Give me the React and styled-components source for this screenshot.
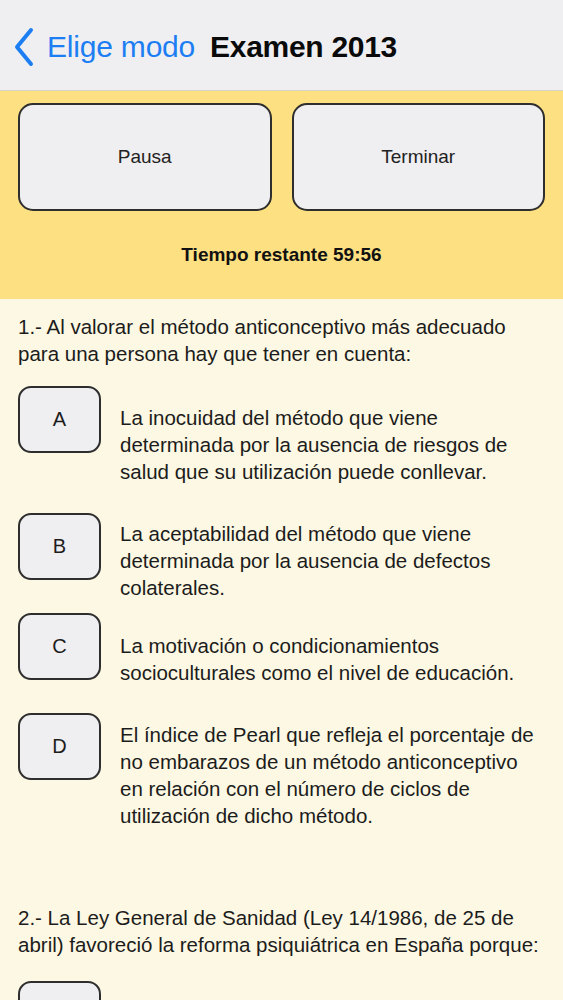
import React from 'react'
import styled, { createGlobalStyle } from "styled-components";

const Global = createGlobalStyle`
body{
    margin: 0;
    font-family: "Liberation Sans", Arial, sans-serif;
    background: #fdf8e3;
}
`;

const Page = styled.div`
width: 563px;
height: 1000px;
overflow: hidden;
background: #fdf8e3;
color: #1c1c1c;
`;

const NavBar = styled.div`
height: 91px;
background: #efeff2;
border-bottom: 1px solid #d6d3c4;
display: flex;
align-items: center;
padding: 3px 0 0 13px;
box-sizing: border-box;
`;

const BackLink = styled.div`
display: flex;
align-items: center;
color: #1c7ef2;
font-size: 30px;
letter-spacing: -0.2px;
gap: 12px;
`;

const Title = styled.div`
font-size: 30px;
font-weight: bold;
color: #0a0a0a;
margin-left: 15px;
letter-spacing: -0.3px;
`;

const Header = styled.div`
background: #fde081;
padding: 12px 18px 0;
height: 208px;
box-sizing: border-box;
`;

const ButtonRow = styled.div`
display: grid;
grid-template-columns: 1fr 1fr;
gap: 20px;
`;

const BigButton = styled.div`
height: 108px;
border: 2px solid #2e2e2e;
border-radius: 15px;
background: #efeef0;
display: flex;
align-items: center;
justify-content: center;
font-size: 19px;
color: #222;
box-sizing: border-box;
`;

const Timer = styled.div`
text-align: center;
font-size: 19px;
font-weight: bold;
margin-top: 33px;
color: #111;
`;

const Content = styled.div`
padding: 14px 18px 0;
`;

const Question = styled.div`
font-size: 20.5px;
line-height: 27px;
margin-top: ${p => p.$top || 0}px;
margin-bottom: ${p => p.$gap}px;
`;

const OptionRow = styled.div`
display: flex;
align-items: flex-start;
margin-bottom: ${p => p.$gap}px;
`;

const LetterBox = styled.div`
flex: 0 0 auto;
width: 83px;
height: 67px;
border: 2px solid #2e2e2e;
border-radius: 13px;
background: #efeef0;
box-sizing: border-box;
display: flex;
align-items: center;
justify-content: center;
font-size: 20px;
`;

const OptionText = styled.div`
margin-left: 19px;
padding-top: ${p => p.$offset}px;
font-size: 20.5px;
line-height: 27px;
white-space: nowrap;
`;

const Chevron = () => (
    <svg width="22" height="40" viewBox="0 0 22 40">
        <path d="M18 3 L4 20 L18 37" fill="none" stroke="#1c7ef2" strokeWidth="4" strokeLinecap="round" strokeLinejoin="round" />
    </svg>
)

const options = [
    { letter: "A", offset: 18, gap: 28, text: ["La inocuidad del método que viene", "determinada por la ausencia de riesgos de", "salud que su utilización puede conllevar."] },
    { letter: "B", offset: 7, gap: 12, text: ["La aceptabilidad del método que viene", "determinada por la ausencia de defectos", "colaterales."] },
    { letter: "C", offset: 19, gap: 27, text: ["La motivación o condicionamientos", "socioculturales como el nivel de educación."] },
    { letter: "D", offset: 8, gap: 0, text: ["El índice de Pearl que refleja el porcentaje de", "no embarazos de un método anticonceptivo", "en relación con el número de ciclos de", "utilización de dicho método."] },
]

const App = () => {
    return (
        <Page>
            <Global />
            <NavBar>
                <BackLink>
                    <Chevron />
                    Elige modo
                </BackLink>
                <Title>Examen 2013</Title>
            </NavBar>
            <Header>
                <ButtonRow>
                    <BigButton>Pausa</BigButton>
                    <BigButton>Terminar</BigButton>
                </ButtonRow>
                <Timer>Tiempo restante 59:56</Timer>
            </Header>
            <Content>
                <Question $gap={19}>
                    1.- Al valorar el método anticonceptivo más adecuado<br />
                    para una persona hay que tener en cuenta:
                </Question>
                {options.map(o => (
                    <OptionRow key={o.letter} $gap={o.gap}>
                        <LetterBox>{o.letter}</LetterBox>
                        <OptionText $offset={o.offset}>
                            {o.text.map((t, i) => <div key={i}>{t}</div>)}
                        </OptionText>
                    </OptionRow>
                ))}
                <Question $top={75} $gap={23}>
                    2.- La Ley General de Sanidad (Ley 14/1986, de 25 de<br />
                    abril) favoreció la reforma psiquiátrica en España porque:
                </Question>
                <OptionRow $gap={0}>
                    <LetterBox />
                </OptionRow>
            </Content>
        </Page>
    )
}

export default App
